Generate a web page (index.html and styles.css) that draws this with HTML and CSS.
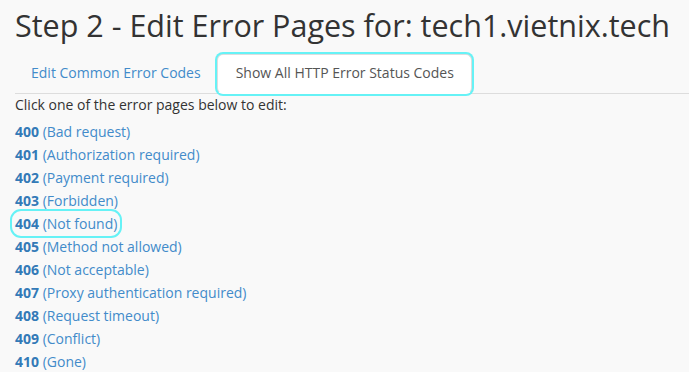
FILE: index.html
```html
<!DOCTYPE html>
<html>
<head>
<meta charset="utf-8">
<link rel="stylesheet" href="styles.css">
</head>
<body>
<div class="page">
  <h1 class="title">Step 2 - Edit Error Pages for: tech1.vietnix.tech</h1>
  <ul class="tabs">
    <li class="tab"><a href="#">Edit Common Error Codes</a></li>
    <li class="tab active"><a href="#">Show All HTTP Error Status Codes</a></li>
  </ul>
  <p class="intro">Click one of the error pages below to edit:</p>
  <ul class="codes">
    <li><a href="#"><b>400</b> (Bad request)</a></li>
    <li><a href="#"><b>401</b> (Authorization required)</a></li>
    <li><a href="#"><b>402</b> (Payment required)</a></li>
    <li><a href="#"><b>403</b> (Forbidden)</a></li>
    <li><a href="#" class="focused"><b>404</b> (Not found)</a></li>
    <li><a href="#"><b>405</b> (Method not allowed)</a></li>
    <li><a href="#"><b>406</b> (Not acceptable)</a></li>
    <li><a href="#"><b>407</b> (Proxy authentication required)</a></li>
    <li><a href="#"><b>408</b> (Request timeout)</a></li>
    <li><a href="#"><b>409</b> (Conflict)</a></li>
    <li><a href="#"><b>410</b> (Gone)</a></li>
  </ul>
</div>
</body>
</html>
```
FILE: styles.css
```css
html, body {
  margin: 0;
  padding: 0;
  background: #f9f9f9;
  font-family: "Open Sans", "Liberation Sans", sans-serif;
  color: #333;
  overflow: hidden;
}
.page {
  padding-left: 15px;
}
.title {
  margin: 0;
  padding-top: 7px;
  font-size: 30.5px;
  font-weight: 400;
  line-height: 36px;
  color: #333;
}
.tabs {
  list-style: none;
  margin: 11px 0 0 0;
  padding: 0;
  display: flex;
  border-bottom: 1px solid #ddd;
}
.tab {
  margin-bottom: -1px;
}
.tab a {
  display: block;
  padding: 8px 15px 10px 15px;
  font-size: 14px;
  line-height: 20px;
  color: #428bca;
  text-decoration: none;
  border: 1px solid transparent;
  border-radius: 4px 4px 0 0;
}
.tab.active a {
  color: #555;
  background: #fff;
  border-color: #ddd #ddd transparent #ddd;
  padding: 8px 17px 10px 18px;
  box-shadow: 0 0 0 2px #66f2f6;
  border-radius: 6px;
}
.intro {
  margin: 1px 0 5px 0;
  font-size: 14px;
  line-height: 20px;
}
.codes {
  list-style: none;
  margin: 0;
  padding: 0;
}
.codes li {
  font-size: 14px;
  line-height: 23px;
}
.codes a {
  color: #428bca;
  text-decoration: none;
}
.codes b {
  font-weight: 700;
  color: #337ab7;
}
.codes a.focused {
  outline: 2px solid #66f2f6;
  outline-offset: 3px;
  border-radius: 6px;
}
```
